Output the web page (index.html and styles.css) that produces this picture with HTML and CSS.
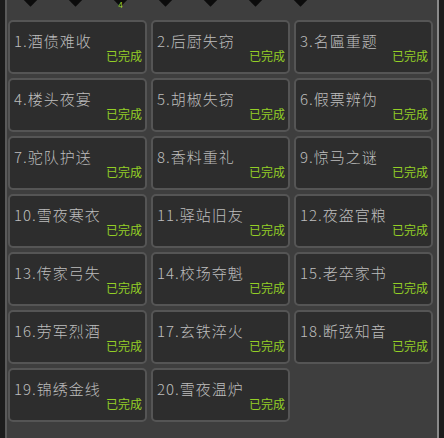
FILE: index.html
```html
<!DOCTYPE html>
<html lang="zh">
<head>
<meta charset="utf-8">
<link rel="stylesheet" href="styles.css">
</head>
<body>
<div class="frame">
  <div class="panel">
    <div class="tabs">
      <div class="tab"><span class="dia"></span></div>
      <div class="tab"><span class="dia"></span></div>
      <div class="tab active"><span class="dia"></span><span class="num">4</span></div>
      <div class="tab"><span class="dia"></span></div>
      <div class="tab"><span class="dia"></span></div>
      <div class="tab"><span class="dia"></span></div>
      <div class="tab"><span class="dia"></span></div>
    </div>
    <div class="grid">
      <div class="card"><div class="title">1.酒债难收</div><div class="done">已完成</div></div>
      <div class="card"><div class="title">2.后厨失窃</div><div class="done">已完成</div></div>
      <div class="card"><div class="title">3.名匾重题</div><div class="done">已完成</div></div>
      <div class="card"><div class="title">4.楼头夜宴</div><div class="done">已完成</div></div>
      <div class="card"><div class="title">5.胡椒失窃</div><div class="done">已完成</div></div>
      <div class="card"><div class="title">6.假票辨伪</div><div class="done">已完成</div></div>
      <div class="card"><div class="title">7.驼队护送</div><div class="done">已完成</div></div>
      <div class="card"><div class="title">8.香料重礼</div><div class="done">已完成</div></div>
      <div class="card"><div class="title">9.惊马之谜</div><div class="done">已完成</div></div>
      <div class="card"><div class="title">10.雪夜寒衣</div><div class="done">已完成</div></div>
      <div class="card"><div class="title">11.驿站旧友</div><div class="done">已完成</div></div>
      <div class="card"><div class="title">12.夜盗官粮</div><div class="done">已完成</div></div>
      <div class="card"><div class="title">13.传家弓失</div><div class="done">已完成</div></div>
      <div class="card"><div class="title">14.校场夺魁</div><div class="done">已完成</div></div>
      <div class="card"><div class="title">15.老卒家书</div><div class="done">已完成</div></div>
      <div class="card"><div class="title">16.劳军烈酒</div><div class="done">已完成</div></div>
      <div class="card"><div class="title">17.玄铁淬火</div><div class="done">已完成</div></div>
      <div class="card"><div class="title">18.断弦知音</div><div class="done">已完成</div></div>
      <div class="card"><div class="title">19.锦绣金线</div><div class="done">已完成</div></div>
      <div class="card"><div class="title">20.雪夜温炉</div><div class="done">已完成</div></div>
    </div>
  </div>
</div>
</body>
</html>
```
FILE: styles.css
```css
html, body {
  margin: 0;
  padding: 0;
  background: #1c1c1c;
}
body {
  width: 444px;
  height: 438px;
  overflow: hidden;
  font-family: "Noto Sans CJK SC", "Noto Sans", sans-serif;
}
.frame {
  display: flex;
  height: 438px;
  padding-left: 5px;
  padding-right: 5px;
}
.panel {
  flex: 1;
  background: #3e3e3e;
  border-left: 2px solid #5a5a5a;
  border-right: 2px solid #8a8a8a;
  display: flex;
  flex-direction: column;
}
.tabs {
  height: 20px;
  display: flex;
  padding-left: 1px;
  overflow: hidden;
}
.tab {
  width: 45px;
  flex: none;
  display: flex;
  justify-content: center;
  position: relative;
}
.dia {
  width: 13px;
  height: 13px;
  background: #0c0c0c;
  transform: rotate(45deg);
  margin-top: -9px;
}
.num {
  position: absolute;
  z-index: 1;
  top: 1px;
  left: 0;
  right: 0;
  text-align: center;
  color: #9fd830;
  font-size: 8px;
  line-height: 8px;
}
.grid {
  display: grid;
  grid-template-columns: repeat(3, 139px);
  grid-auto-rows: 54px;
  column-gap: 4px;
  row-gap: 4px;
  padding-left: 1px;
}
.card {
  box-sizing: border-box;
  background: #2d2d2d;
  border: 2px solid #555555;
  border-radius: 5px;
  display: flex;
  flex-direction: column;
  padding: 8px 3px 0 4px;
}
.title {
  color: #bdbdbd;
  font-size: 15px;
  line-height: 22px;
  letter-spacing: 1px;
  font-weight: 300;
}
.done {
  color: #93cf26;
  font-size: 12px;
  line-height: 14px;
  text-align: right;
  margin-top: -3px;
}
```
